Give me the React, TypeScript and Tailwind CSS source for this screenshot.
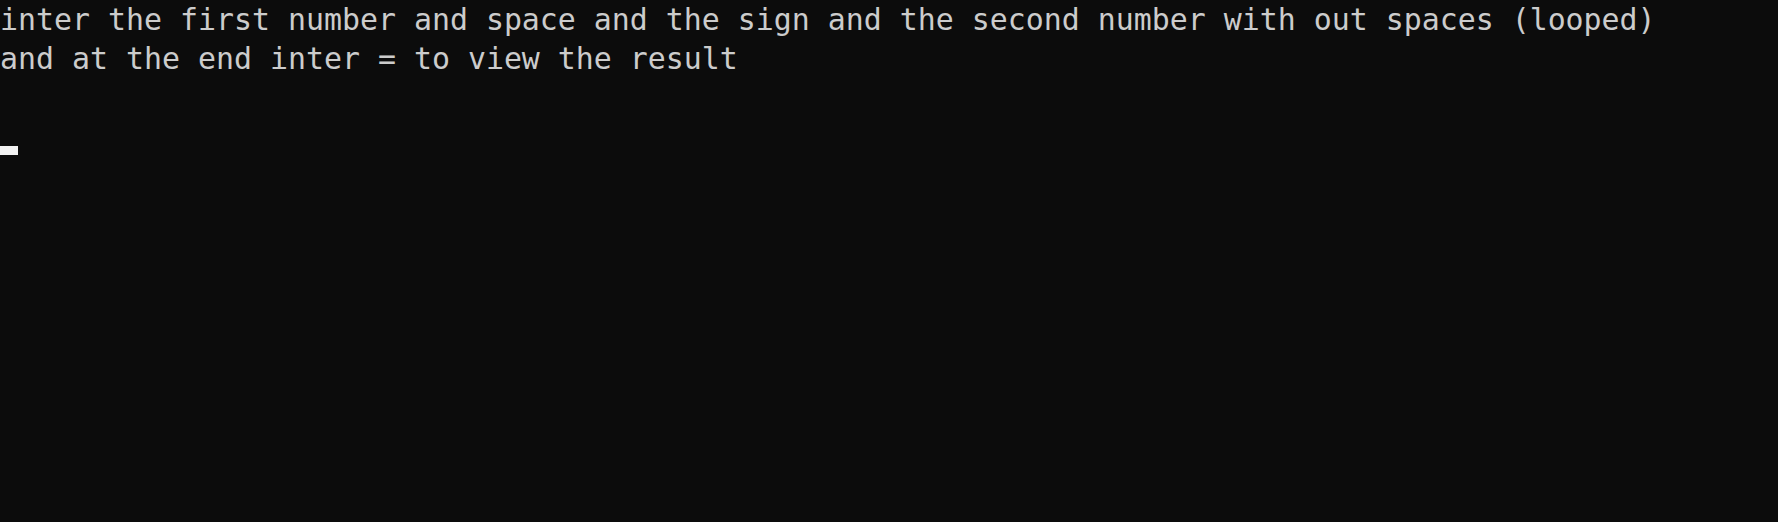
const lines = [
  "inter the first number and space and the sign and the second number with out spaces (looped)",
  "and at the end inter = to view the result",
  "",
];

const App = () => {
  return (
    <section className="w-[1778px] h-[522px] bg-[#0c0c0c] text-[#cccccc] overflow-hidden">
      <div className="font-['DejaVu_Sans_Mono',monospace] text-[29.9px] leading-[39px] whitespace-pre">
        {lines.map((line, i) => (
          <div key={i} className="h-[39px]">
            {line}
          </div>
        ))}
        {/* prompt row with underline cursor */}
        <div className="h-[39px] flex items-end">
          <div className="w-[18px] h-[9px] mb-[1px] bg-[#f2f2f2]" />
        </div>
      </div>
    </section>
  );
};

export default App;
